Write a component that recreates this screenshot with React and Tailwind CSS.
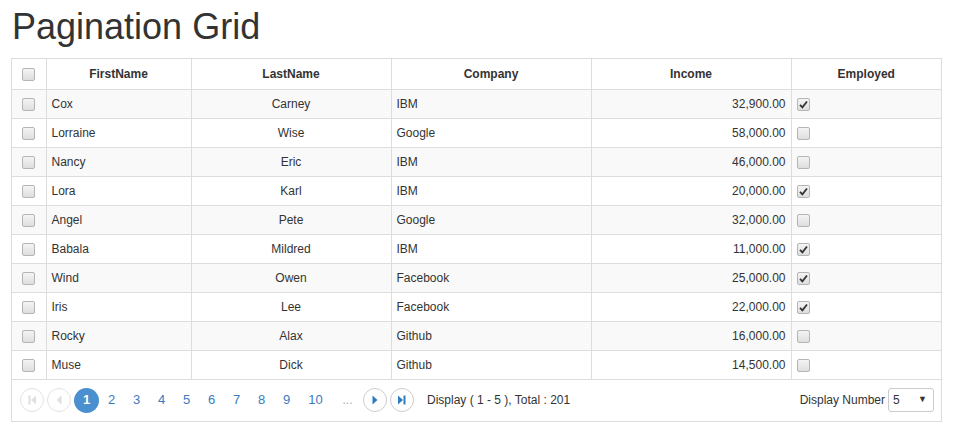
const rows = [
  ['Cox', 'Carney', 'IBM', '32,900.00', true],
  ['Lorraine', 'Wise', 'Google', '58,000.00', false],
  ['Nancy', 'Eric', 'IBM', '46,000.00', false],
  ['Lora', 'Karl', 'IBM', '20,000.00', true],
  ['Angel', 'Pete', 'Google', '32,000.00', false],
  ['Babala', 'Mildred', 'IBM', '11,000.00', true],
  ['Wind', 'Owen', 'Facebook', '25,000.00', true],
  ['Iris', 'Lee', 'Facebook', '22,000.00', true],
  ['Rocky', 'Alax', 'Github', '16,000.00', false],
  ['Muse', 'Dick', 'Github', '14,500.00', false],
];

function Box({checked}) {
  return (
    <span className="inline-flex w-[13px] h-[13px] items-center justify-center rounded-[2px] border border-[#b5b5b5] bg-gradient-to-b from-[#f4f4f4] to-[#dedede] align-middle">
      {checked && (
        <svg width="9" height="9" viewBox="0 0 9 9">
          <path d="M1 4.8 L3.4 7.3 L8 1.5" stroke="#333" strokeWidth="1.8" fill="none" />
        </svg>
      )}
    </span>
  );
}

function NavBtn({children, active}) {
  return (
    <span className={`inline-flex w-6 h-6 items-center justify-center rounded-full border ${active ? 'border-[#ccc]' : 'border-[#e3e3e3]'} mr-[3px]`}>
      <svg width="12" height="12" viewBox="0 0 12 12" fill={active ? '#2f7bbf' : '#e0e0e0'}>
        {children}
      </svg>
    </span>
  );
}

const cell = 'border-r border-[#ddd] px-[5px] h-[29px]';

export default function App() {
  return (
    <div className="bg-white w-[953px] h-[431px] pt-[7px] pl-[11px] text-[#333]" style={{fontFamily: '"Liberation Sans", Arial, sans-serif'}}>
      <h1 className="text-[36px] leading-[40px] font-normal pl-[1px] mb-[11px]">Pagination Grid</h1>
      <div className="w-[931px] border border-[#ddd] text-[12px]">
        <table className="w-full border-collapse table-fixed">
          <colgroup>
            <col className="w-[34px]" />
            <col className="w-[145px]" />
            <col className="w-[200px]" />
            <col className="w-[200px]" />
            <col className="w-[200px]" />
            <col />
          </colgroup>
          <thead>
            <tr className="border-b border-[#ddd] font-bold">
              <th className={`${cell} h-[30px] text-center`}><Box /></th>
              <th className={`${cell} h-[30px] text-center`}>FirstName</th>
              <th className={`${cell} h-[30px] text-center`}>LastName</th>
              <th className={`${cell} h-[30px] text-center`}>Company</th>
              <th className={`${cell} h-[30px] text-center`}>Income</th>
              <th className="px-[5px] text-center">Employed</th>
            </tr>
          </thead>
          <tbody>
            {rows.map((r, i) => (
              <tr key={i} className={`border-b border-[#ddd] ${i % 2 === 0 ? 'bg-[#f9f9f9]' : 'bg-white'}`}>
                <td className={`${cell} text-center`}><Box /></td>
                <td className={cell}>{r[0]}</td>
                <td className={`${cell} text-center`}>{r[1]}</td>
                <td className={cell}>{r[2]}</td>
                <td className={`${cell} text-right`}>{r[3]}</td>
                <td className="px-[5px]"><Box checked={r[4]} /></td>
              </tr>
            ))}
          </tbody>
        </table>
        <div className="flex items-center h-[41px] pl-[8px] pr-[7px]">
          <NavBtn><rect x="2.5" y="1.5" width="2" height="9" /><path d="M10 1.5 L10 10.5 L5 6 Z" /></NavBtn>
          <NavBtn><path d="M8.5 1.5 L8.5 10.5 L3.5 6 Z" /></NavBtn>
          <span className="inline-flex w-[25px] h-[25px] items-center justify-center rounded-full bg-[#4a8fd0] text-white font-bold text-[13px]">1</span>
          {[2, 3, 4, 5, 6, 7, 8, 9].map(n => (
            <span key={n} className="w-[25px] text-center text-[13px] text-[#3a7bc0]">{n}</span>
          ))}
          <span className="w-[33px] text-center text-[13px] text-[#3a7bc0]">10</span>
          <span className="w-[31px] text-center text-[#aaa]">...</span>
          <NavBtn active><path d="M3.5 1.5 L3.5 10.5 L8.5 6 Z" /></NavBtn>
          <NavBtn active><path d="M2 1.5 L2 10.5 L7 6 Z" /><rect x="7.5" y="1.5" width="2" height="9" /></NavBtn>
          <span className="ml-[10px] text-[12px]">Display ( 1 - 5 ), Total : 201</span>
          <span className="ml-auto text-[12px] mr-[3px]">Display Number</span>
          <span className="flex items-center justify-between w-[46px] h-[24px] border border-[#ccc] rounded-[3px] pl-[4px] pr-[6px] text-[12px]">
            <span>5</span>
            <span className="text-[9px]">▼</span>
          </span>
        </div>
      </div>
    </div>
  );
}
